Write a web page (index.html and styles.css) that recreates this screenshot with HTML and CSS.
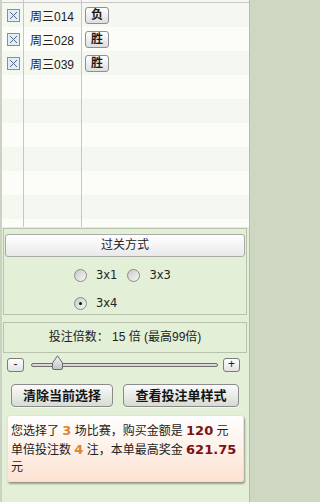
FILE: index.html
```html
<!DOCTYPE html>
<html>
<head>
<meta charset="utf-8">
<link rel="stylesheet" href="styles.css">
</head>
<body>
<div class="page">
  <div class="list">
    <div class="row stub"><span class="c1"></span><span class="c2"></span><span class="c3"></span></div>
    <div class="row odd">
      <span class="c1"><svg class="chk" width="13" height="13" viewBox="0 0 13 13"><rect x="0.5" y="0.5" width="12" height="12" fill="#e4ecf4" stroke="#7393b7"/><path d="M3 3L10 10M10 3L3 10" stroke="#4d6a8a"/></svg></span>
      <span class="c2">周三014</span>
      <span class="c3"><span class="res">负</span></span>
    </div>
    <div class="row even">
      <span class="c1"><svg class="chk" width="13" height="13" viewBox="0 0 13 13"><rect x="0.5" y="0.5" width="12" height="12" fill="#e4ecf4" stroke="#7393b7"/><path d="M3 3L10 10M10 3L3 10" stroke="#4d6a8a"/></svg></span>
      <span class="c2">周三028</span>
      <span class="c3"><span class="res">胜</span></span>
    </div>
    <div class="row odd">
      <span class="c1"><svg class="chk" width="13" height="13" viewBox="0 0 13 13"><rect x="0.5" y="0.5" width="12" height="12" fill="#e4ecf4" stroke="#7393b7"/><path d="M3 3L10 10M10 3L3 10" stroke="#4d6a8a"/></svg></span>
      <span class="c2">周三039</span>
      <span class="c3"><span class="res">胜</span></span>
    </div>
    <div class="row even"><span class="c1"></span><span class="c2"></span><span class="c3"></span></div>
    <div class="row odd"><span class="c1"></span><span class="c2"></span><span class="c3"></span></div>
    <div class="row even"><span class="c1"></span><span class="c2"></span><span class="c3"></span></div>
    <div class="row odd"><span class="c1"></span><span class="c2"></span><span class="c3"></span></div>
    <div class="row even"><span class="c1"></span><span class="c2"></span><span class="c3"></span></div>
    <div class="row odd"><span class="c1"></span><span class="c2"></span><span class="c3"></span></div>
    <div class="row even part"><span class="c1"></span><span class="c2"></span><span class="c3"></span></div>
  </div>

  <div class="panel">
    <div class="box pass">
      <div class="box-head">过关方式</div>
      <div class="radios">
        <span class="radio"><span class="dot"></span>3x1</span>
        <span class="radio"><span class="dot"></span>3x3</span>
        <span class="radio on"><span class="dot"></span>3x4</span>
      </div>
    </div>

    <div class="box times">投注倍数： 15 倍 (最高99倍)</div>

    <div class="slider">
      <span class="step">-</span>
      <span class="track">
        <svg class="thumb" width="11" height="15" viewBox="0 0 11 15">
          <defs><linearGradient id="tg" x1="0" y1="0" x2="0" y2="1"><stop offset="0" stop-color="#f4f4f4"/><stop offset="1" stop-color="#c4c4c4"/></linearGradient></defs>
          <path d="M5.5 0.8 L10.5 8 V13 Q10.5 14.5 9 14.5 H2 Q0.5 14.5 0.5 13 V8 Z" fill="url(#tg)" stroke="#6a6a6a"/>
        </svg>
      </span>
      <span class="step">+</span>
    </div>

    <div class="actions">
      <span class="btn b1">清除当前选择</span>
      <span class="btn b2">查看投注单样式</span>
    </div>

    <div class="info">您选择了 <b class="n1">3</b> 场比赛，购买金额是 <b class="n2">120</b> 元<br>单倍投注数 <b class="n1">4</b> 注，本单最高奖金 <b class="n2">621.75</b><br>元</div>
  </div>
</div>
</body>
</html>
```

FILE: styles.css
```css
html, body {
  margin: 0;
  padding: 0;
}
html {
  background: #cdd7c2;
}
body {
  width: 255px;
  height: 502px;
  overflow: hidden;
  background: #cdd7c2;
  font-family: "Liberation Sans", "Noto Sans CJK SC", sans-serif;
  font-size: 12px;
  color: #222;
}
.page {
  width: 247px;
  height: 502px;
  border-left: 2px solid #cbd2c4;
  border-right: 1px solid #b3bea8;
  background: #e3efd6;
}
.list {
  height: 227px;
  overflow: hidden;
}
.row {
  display: grid;
  grid-template-columns: 22px 58px 1fr;
  height: 24px;
}
.row > span {
  display: flex;
  align-items: center;
}
.row .c1, .row .c2 {
  border-right: 1px solid #c6c6c6;
}
.row .c1 {
  justify-content: center;
}
.row .c2 {
  padding-left: 6px;
}
.row .c3 {
  padding-left: 3px;
}
.row.stub {
  height: 2px;
  background: #f6f7f3;
  border-bottom: 1px solid #c6c6c6;
}
.row.odd {
  background: #f5f7f1;
}
.row.even {
  background: #fcfdf8;
}
.chk {
  display: block;
  margin-left: 1px;
}
.res {
  display: inline-block;
  width: 22px;
  height: 15px;
  line-height: 15px;
  text-align: center;
  border: 1px solid #8f8f8f;
  border-radius: 3px;
  background: linear-gradient(#ffffff, #dedede);
  font-weight: bold;
  color: #1a1a1a;
  font-size: 12px;
}

.panel {
  padding: 1px 2px 0 1px;
}
.box {
  border: 1px solid #b7c3ac;
}
.box-head {
  margin: 5px 1px 0;
  height: 21px;
  line-height: 21px;
  border: 1px solid #a9a9a9;
  border-radius: 3px;
  background: linear-gradient(#ffffff, #e9e9e9);
  text-align: center;
  color: #222;
}
.radios {
  display: grid;
  grid-template-columns: auto auto;
  justify-content: start;
  column-gap: 10px;
  row-gap: 14px;
  padding: 11px 0 4px 70px;
}
.radio {
  display: flex;
  align-items: center;
  gap: 9px;
  height: 14px;
  font-family: "DejaVu Sans", sans-serif;
  font-size: 11.5px;
  color: #222;
}
.dot {
  width: 11px;
  height: 11px;
  border: 1px solid #8a8a8a;
  border-radius: 50%;
  background: linear-gradient(135deg, #c9c9c9, #f7f7f7);
  display: flex;
  align-items: center;
  justify-content: center;
}
.radio.on .dot::after {
  content: "";
  width: 3px;
  height: 3px;
  border-radius: 50%;
  background: #111;
}
.times {
  margin-top: 7px;
  height: 29px;
  line-height: 29px;
  text-align: center;
  color: #222;
}
.slider {
  display: flex;
  align-items: center;
  margin-top: 5px;
  height: 14px;
  padding-left: 4px;
}
.step {
  width: 15px;
  height: 12px;
  line-height: 11px;
  border: 1px solid #7c7c7c;
  border-radius: 3px;
  background: linear-gradient(#ffffff, #e2e2e2);
  text-align: center;
  font-size: 12px;
  color: #222;
}
.track {
  position: relative;
  width: 185px;
  height: 2px;
  margin: 0 5px 0 7px;
  border: 1px solid #6f6f6f;
  border-radius: 2px;
  background: #d8d8d8;
}
.thumb {
  position: absolute;
  left: 20px;
  top: -9px;
}
.actions {
  display: flex;
  gap: 10px;
  margin-top: 12px;
  padding-left: 8px;
}
.btn {
  height: 21px;
  line-height: 21px;
  border: 1px solid #8b8b8b;
  border-radius: 4px;
  background: linear-gradient(#fbfbfb, #d7dbd2);
  text-align: center;
  font-weight: bold;
  font-size: 13px;
  color: #141414;
  box-shadow: 0 1px 0 rgba(255,255,255,0.6);
}
.b1 { width: 100px; }
.b2 { width: 114px; }
.info {
  margin: 8px 3px 0 4px;
  padding: 6px 3px 4px;
  border: 1px solid #eadfd4;
  border-radius: 3px;
  background: linear-gradient(#ffffff, #fde2d2);
  box-shadow: 1px 2px 2px rgba(0,0,0,0.35);
  line-height: 17.5px;
  color: #222;
}
.info b {
  font-family: "DejaVu Sans", sans-serif;
  font-weight: bold;
  font-size: 13px;
}
.n1 { color: #e0842c; }
.n2 { color: #7d1111; }
```
